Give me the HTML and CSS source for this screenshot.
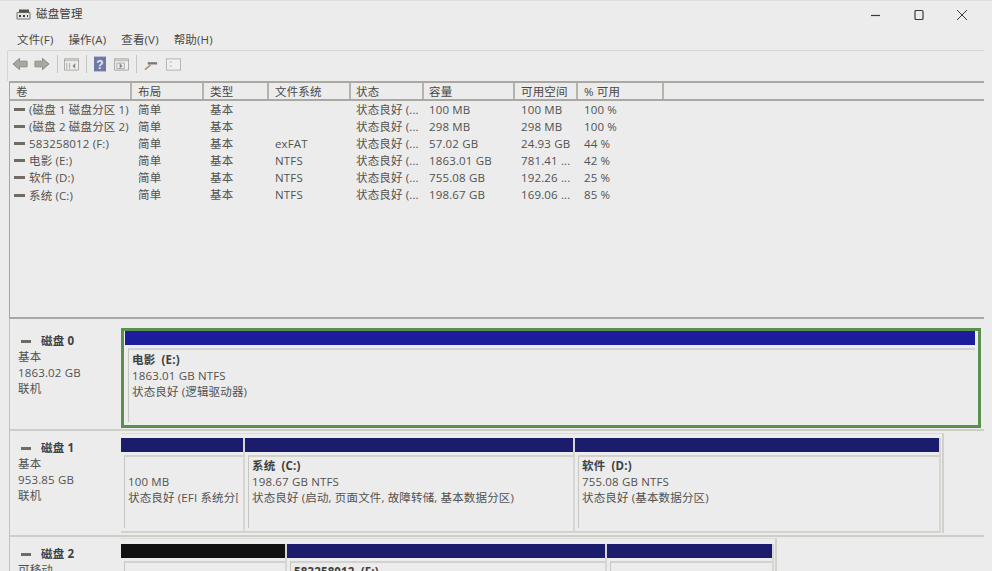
FILE: index.html
```html
<!DOCTYPE html>
<html lang="zh">
<head>
<meta charset="utf-8">
<title>磁盘管理</title>
<link rel="stylesheet" href="styles.css">
</head>
<body>
<div class="window">
  <header class="titlebar">
    <svg class="app-icon" width="15" height="12" viewBox="0 0 15 12"><path d="M1 4.5h13V11H1z" fill="#e6e6e6" stroke="#77746e"/><path d="M3 1.5h10v3H3z" fill="#55524c"/><path d="M3 7h2v2H3zM7 7h2v2H7zM11 7h1v2h-1z" fill="#3a3a3a"/></svg>
    <span class="title">磁盘管理</span>
    <div class="win-controls">
      <svg width="12" height="12" viewBox="0 0 12 12"><path d="M1 6.5h9" stroke="#3a3a3a" stroke-width="1.2"/></svg>
      <svg width="12" height="12" viewBox="0 0 12 12"><rect x="2" y="1.5" width="8" height="9" rx="1" fill="none" stroke="#3a3a3a" stroke-width="1.2"/></svg>
      <svg width="12" height="12" viewBox="0 0 12 12"><path d="M1 1l10 10M11 1L1 11" stroke="#3a3a3a" stroke-width="1"/></svg>
    </div>
  </header>
  <nav class="menubar">
    <span>文件(F)</span><span>操作(A)</span><span>查看(V)</span><span>帮助(H)</span>
  </nav>
  <div class="toolbar">
    <svg width="16" height="14" viewBox="0 0 17 14"><path d="M1 7l7-6v3h8v6H8v3z" fill="#a9a79f" stroke="#8b8981"/></svg>
    <svg width="16" height="14" viewBox="0 0 17 14"><path d="M16 7L9 1v3H1v6h8v3z" fill="#a9a79f" stroke="#8b8981"/></svg>
    <i class="sep"></i>
    <svg width="15" height="14" viewBox="0 0 16 14"><path d="M.5 1.5h15v12H.5z" fill="#eee" stroke="#a5a5a0"/><path d="M1 2h14v2H1z" fill="#c4c3bd"/><path d="M3 6v6M6 6v6" stroke="#a5a5a0"/><path d="M12 6l-3 3 3 3z" fill="#888"/></svg>
    <i class="sep"></i>
    <svg width="12" height="16" viewBox="0 0 13 16"><rect width="13" height="16" fill="#6f79a8"/><text x="6.5" y="13" text-anchor="middle" class="help-q">?</text></svg>
    <svg class="tool-gap" width="15" height="14" viewBox="0 0 16 14"><path d="M.5 1.5h15v12H.5z" fill="#eee" stroke="#a5a5a0"/><path d="M1 2h14v2H1z" fill="#c4c3bd"/><path d="M3 6h8v6H3z" fill="none" stroke="#aaa"/><path d="M6 6l3 3-3 3z" fill="#888"/></svg>
    <i class="sep"></i>
    <svg width="14" height="13" viewBox="0 0 15 13"><path d="M1 12l6-5" stroke="#a58c55" stroke-width="1.5"/><path d="M4 4h10v2.5H4z" fill="#7a7a75"/></svg>
    <svg class="tool-gap" width="15" height="13" viewBox="0 0 16 13"><rect x=".5" y=".5" width="15" height="12" fill="#f0f0f0" stroke="#b2b2ae"/><path d="M4 4h2M4 8h2" stroke="#aaa"/></svg>
  </div>

  <section class="volumes">
    <div class="vrow vhead">
      <span>卷</span><span>布局</span><span>类型</span><span>文件系统</span><span>状态</span><span>容量</span><span>可用空间</span><span>% 可用</span><span></span>
    </div>
    <div class="vrow"><span class="vname"><i class="dash"></i>(磁盘 1 磁盘分区 1)</span><span>简单</span><span>基本</span><span></span><span>状态良好 (...</span><span>100 MB</span><span>100 MB</span><span>100 %</span></div>
    <div class="vrow"><span class="vname"><i class="dash"></i>(磁盘 2 磁盘分区 2)</span><span>简单</span><span>基本</span><span></span><span>状态良好 (...</span><span>298 MB</span><span>298 MB</span><span>100 %</span></div>
    <div class="vrow"><span class="vname"><i class="dash"></i>583258012 (F:)</span><span>简单</span><span>基本</span><span>exFAT</span><span>状态良好 (...</span><span>57.02 GB</span><span>24.93 GB</span><span>44 %</span></div>
    <div class="vrow"><span class="vname"><i class="dash"></i>电影 (E:)</span><span>简单</span><span>基本</span><span>NTFS</span><span>状态良好 (...</span><span>1863.01 GB</span><span>781.41 ...</span><span>42 %</span></div>
    <div class="vrow"><span class="vname"><i class="dash"></i>软件 (D:)</span><span>简单</span><span>基本</span><span>NTFS</span><span>状态良好 (...</span><span>755.08 GB</span><span>192.26 ...</span><span>25 %</span></div>
    <div class="vrow"><span class="vname"><i class="dash"></i>系统 (C:)</span><span>简单</span><span>基本</span><span>NTFS</span><span>状态良好 (...</span><span>198.67 GB</span><span>169.06 ...</span><span>85 %</span></div>
  </section>

  <section class="disks">
    <div class="disk disk-0">
      <div class="disk-info">
        <div class="disk-name"><i class="dash"></i>磁盘 0</div>
        <div>基本</div><div>1863.02 GB</div><div>联机</div>
      </div>
      <div class="parts selected">
        <div class="part part-full">
          <div class="bar bar-blue"></div>
          <div class="pbody"><b>电影 &nbsp;(E:)</b><div>1863.01 GB NTFS</div><div>状态良好 (逻辑驱动器)</div></div>
        </div>
      </div>
    </div>
    <div class="disk disk-1">
      <div class="disk-info">
        <div class="disk-name"><i class="dash"></i>磁盘 1</div>
        <div>基本</div><div>953.85 GB</div><div>联机</div>
      </div>
      <div class="parts frame frame-1">
        <div class="part w122"><div class="bar bar-navy"></div><div class="pbody"><b>&nbsp;</b><div>100 MB</div><div class="clip">状态良好 (EFI 系统分区)</div></div></div>
        <div class="part w328"><div class="bar bar-navy"></div><div class="pbody"><b>系统 &nbsp;(C:)</b><div>198.67 GB NTFS</div><div>状态良好 (启动, 页面文件, 故障转储, 基本数据分区)</div></div></div>
        <div class="part w364"><div class="bar bar-navy"></div><div class="pbody"><b>软件 &nbsp;(D:)</b><div>755.08 GB NTFS</div><div>状态良好 (基本数据分区)</div></div></div>
      </div>
    </div>
    <div class="disk disk-2">
      <div class="disk-info">
        <div class="disk-name"><i class="dash"></i>磁盘 2</div>
        <div>可移动</div>
      </div>
      <div class="parts frame frame-2">
        <div class="part w164"><div class="bar bar-black"></div><div class="pbody"></div></div>
        <div class="part w318"><div class="bar bar-navy"></div><div class="pbody"><b>583258012 &nbsp;(F:)</b></div></div>
        <div class="part w165"><div class="bar bar-navy"></div><div class="pbody"></div></div>
      </div>
    </div>
  </section>
</div>
</body>
</html>
```
FILE: styles.css
```css
* { box-sizing: border-box; }
html, body { margin: 0; height: 100%; overflow: hidden; }
body {
  background: #ececec;
  color: #525250;
  font: 11.5px/16px "Open Sans", "Noto Sans CJK SC", sans-serif;
  letter-spacing: .15px;
}
.window { width: 992px; height: 571px; overflow: hidden; border-top: 1px solid #dedede; }
.titlebar { height: 25px; display: flex; align-items: center; padding: 0 0 0 16px; }
.app-icon { margin-right: 5px; }
.title { color: #404040; }
.win-controls { margin-left: auto; display: flex; gap: 31px; padding: 2px 24px 0 0; }
.menubar {
  height: 25px; margin-left: 8px; width: 976px;
  display: flex; align-items: center; gap: 15px; padding: 4px 0 0 9px;
  border-bottom: 1px solid #d6d6d3; color: #484846;
}
.toolbar {
  height: 30px; margin-left: 7px; width: 977px;
  display: flex; align-items: center; gap: 6px; padding: 0 0 4px 4px;
  border-left: 1px solid #d6d6d3;
}
.toolbar .sep:nth-of-type(1) { margin-right: 0; }
.tool-gap { margin-left: 2px; }
.sep { width: 1px; height: 18px; background: #c4c4c0; margin: 0 1px; }
.help-q { font: bold 13px "Liberation Sans", sans-serif; fill: #e8e8f0; }
.volumes {
  height: 238px; margin-left: 9px; width: 975px;
  border-left: 1px solid #a8a6a0; border-bottom: 2px solid #aaa8a2;
}
.vrow {
  display: grid;
  grid-template-columns: 122px 72px 65px 82px 73px 91px 63px 86px 1fr;
  height: 17.1px; line-height: 17px;
  white-space: nowrap;
}
.vrow > span { padding-left: 6px; overflow: hidden; }
.vrow > span:nth-child(5), .vrow > span:nth-child(6) { padding-left: 5px; }
.vrow.vhead {
  height: 20px; line-height: 17px;
  border-top: 2px solid #aaa8a2; border-bottom: 2px solid #aaa8a2; color: #484846;
}
.vhead > span { border-right: 2px solid #b5b3ad; }
.vhead > span:last-child { border-right: 0; }
.vname { padding-left: 4px !important; display: flex; align-items: center; }
.dash { display: inline-block; width: 11px; height: 3px; background: #6e6c64; margin-right: 4px; flex: none; }
.disks { margin-left: 9px; width: 975px; border-left: 1px solid #c4c2bc; }
.disk { display: flex; border-bottom: 2px solid #cfcdc8; }
.disk-0 { height: 112px; padding-top: 9px; }
.disk-1 { height: 106px; padding-top: 2px; }
.disk-2 { height: 60px; padding-top: 1px; border-bottom: 0; }
.disk-info { width: 111px; flex: none; padding: 5px 0 0 8px; line-height: 16px; }
.disk-1 .disk-info { padding-top: 7px; }
.disk-2 .disk-info { padding-top: 8px; }
.disk-name { font-weight: 700; color: #404040; display: flex; align-items: center; padding-left: 3px; height: 16px; }
.disk-name .dash { margin-right: 10px; width: 10px; }
.parts { display: flex; }
.selected { width: 860px; height: 100px; border: 3px solid #5a8f4d; padding: 0 3px 0 1px; }
.frame { padding: 5px 0 0 0; border-right: 2px solid #d0d0cc; border-top: 1px solid #dcdcd8; }
.frame-1 { width: 823px; height: 100px; padding-top: 4px; }
.frame-2 { width: 656px; height: 60px; }
.part { display: flex; flex-direction: column; flex: none; border-right: 2px solid #d6d6d2; border-bottom: 2px solid #d2d2ce; }
.part-full { flex: 1; border-right: 0; border-bottom: 0; }
.part-full .pbody { padding-top: 2px; }
.w122 { width: 124px; }
.w328 { width: 330px; }
.w364 { width: 366px; }
.w164 { width: 166px; }
.w318 { width: 320px; }
.w165 { width: 167px; }
.bar { height: 14px; flex: none; }
.bar-blue { background: #1c1c9c; }
.bar-navy { background: #1c1c6c; }
.bar-black { background: #111; }
.pbody {
  flex: 1; margin: 3px 0 3px 3px; padding: 1px 0 0 3px;
  border-top: 2px solid #d2d2ce; border-left: 1px solid #c6c6c2;
  white-space: nowrap; overflow: hidden;
}
.pbody b { display: block; color: #404040; }
.clip { width: 110px; overflow: hidden; }
```
